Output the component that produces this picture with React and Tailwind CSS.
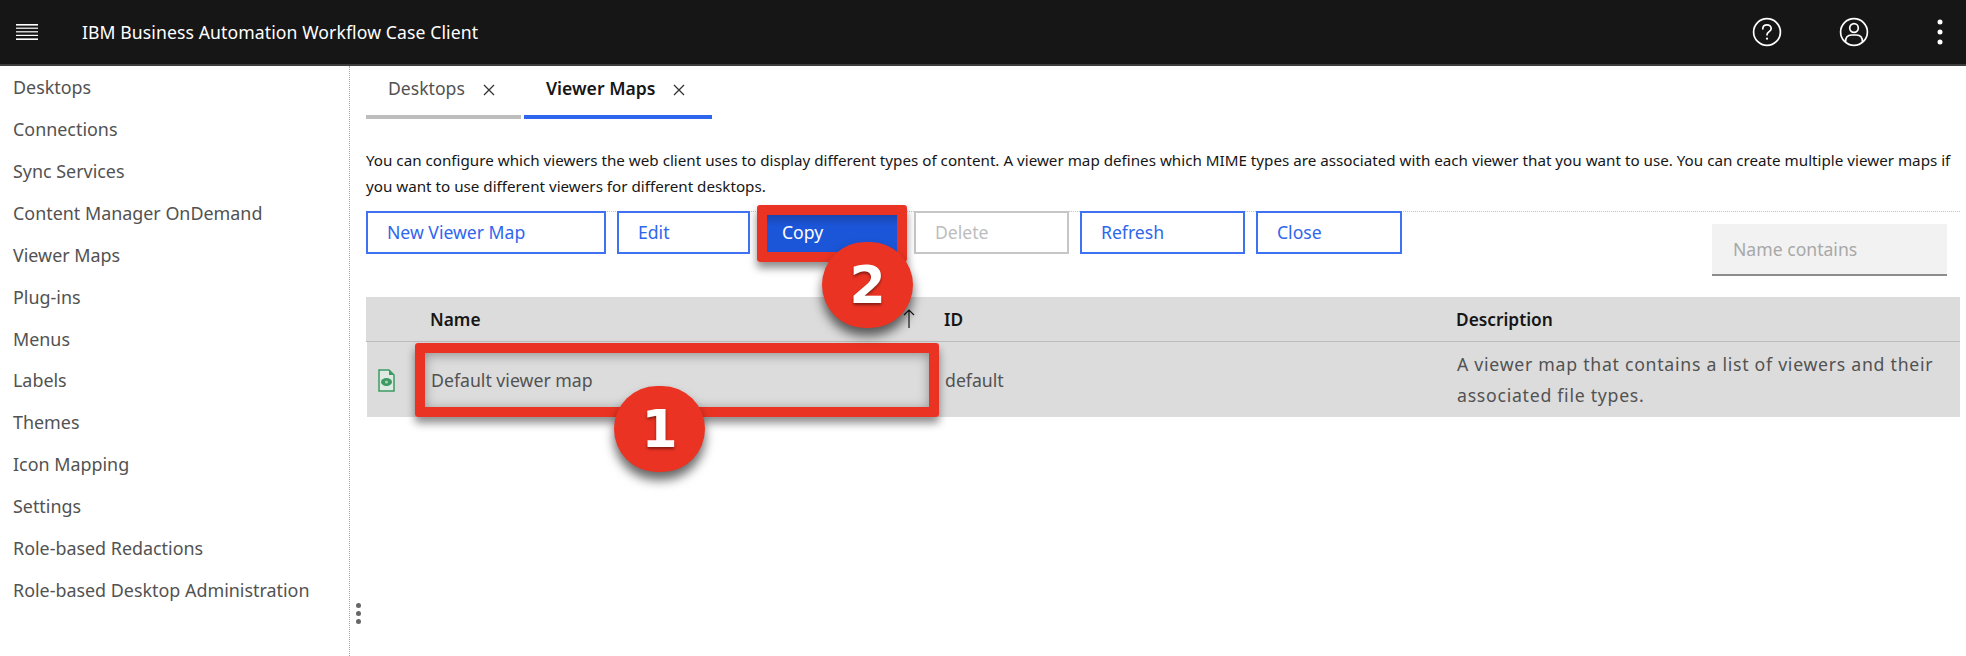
import React from "react";

const nav = ["Desktops","Connections","Sync Services","Content Manager OnDemand","Viewer Maps","Plug-ins","Menus","Labels","Themes","Icon Mapping","Settings","Role-based Redactions","Role-based Desktop Administration"];

function Btn({ children, w, cls = "" }) {
  return <button className={`h-[43px] shrink-0 border-2 border-[#3f72f3] bg-white pl-[19px] text-left text-[17.6px] text-[#2f66ee] ${w} ${cls}`}>{children}</button>;
}

function Badge({ n, cls }) {
  return (
    <div className={`absolute z-20 flex h-[86px] w-[91px] items-center justify-center rounded-full bg-[#ea3323] font-['DejaVu_Sans',sans-serif] text-[52px] font-bold text-white shadow-[0_8px_11px_rgba(0,0,0,0.6)] [text-shadow:0_2px_3px_rgba(0,0,0,0.45)] ${cls}`}>{n}</div>
  );
}

export default function App() {
  return (
    <div className="flex h-[656px] w-full flex-col overflow-hidden bg-white font-['Noto_Sans',sans-serif]">
      <header className="flex h-[66px] shrink-0 items-center border-b-2 border-[#3d3d3d] bg-[#161616] text-white">
        <svg width="22" height="16" viewBox="0 0 22 16" className="ml-[16px]" fill="#fff">
          <rect y="0" width="22" height="1.6" /><rect y="3.6" width="22" height="1.2" /><rect y="7.2" width="22" height="1.2" /><rect y="10.800" width="22" height="1.200" /><rect y="14.400" width="22" height="1.600" />
        </svg>
        <div className="ml-[44px] text-[17.6px] tracking-[0.1px]">IBM Business Automation Workflow Case Client</div>
        <div className="ml-auto flex items-center">
          <svg width="30" height="30" viewBox="0 0 30 30" fill="none" stroke="#fff" strokeWidth="1.7">
            <circle cx="15" cy="15" r="13.4" />
            <path d="M10.8 11.8c0-2.5 1.9-4 4.2-4s4.200 1.500 4.200 3.700c0 3.200-4.200 3-4.200 6.300" strokeLinecap="round" />
            <circle cx="15" cy="21.700" r="1.100" fill="#fff" stroke="none" />
          </svg>
          <svg width="30" height="30" viewBox="0 0 30 30" fill="none" stroke="#fff" strokeWidth="1.7" className="ml-[57px]">
            <circle cx="15" cy="15" r="13.400" />
            <circle cx="15" cy="11" r="4.300" />
            <path d="M6.500 25c0-4.500 2.500-7 6-7h5c3.500 0 6 2.500 6 7" />
          </svg>
          <svg width="8" height="26" viewBox="0 0 8 26" fill="#fff" className="ml-[67px] mr-[22px]">
            <circle cx="4" cy="3" r="2.500" /><circle cx="4" cy="13" r="2.500" /><circle cx="4" cy="23" r="2.500" />
          </svg>
        </div>
      </header>

      <div className="flex min-h-0 flex-1">
        <aside className="relative w-[350px] shrink-0 border-r border-dotted border-[#aaaaaa] pt-[1px]">
          <ul>
            {nav.map((n) => (
              <li key={n} className="flex h-[41.85px] items-center pl-[13px] text-[17.9px] text-[#525252]">{n}</li>
            ))}
          </ul>
          <div className="absolute right-[-12px] top-[537px] flex flex-col gap-[3px]">
            <span className="h-[5px] w-[5px] rounded-full bg-[#666666]" />
            <span className="h-[5px] w-[5px] rounded-full bg-[#666666]" />
            <span className="h-[5px] w-[5px] rounded-full bg-[#666666]" />
          </div>
        </aside>

        <main className="relative min-w-0 flex-1 pl-[16px] pr-[6px]">
          <div className="flex h-[53px] gap-[3px]">
            <div className="flex w-[155px] items-center border-b-4 border-[#bdbdbd] pb-[4px] pl-[22px] text-[17.6px] text-[#525252]">
              Desktops
              <svg width="12" height="12" viewBox="0 0 12 12" stroke="#333" strokeWidth="1.300" className="ml-[18px] mt-[2px]"><path d="M1 1l10 10M11 1L1 11" /></svg>
            </div>
            <div className="flex w-[188px] items-center border-b-4 border-[#2f66ee] pb-[4px] pl-[22px] text-[17.6px] font-semibold text-[#161616]">
              Viewer Maps
              <svg width="12" height="12" viewBox="0 0 12 12" stroke="#333" strokeWidth="1.300" className="ml-[18px] mt-[2px]"><path d="M1 1l10 10M11 1L1 11" /></svg>
            </div>
          </div>

          <p className="mt-[28px] text-[15.2px] leading-[26px] text-[#161616]">
            You can configure which viewers the web client uses to display different types of content. A viewer map defines which MIME types are associated with each viewer that you want to use. You can create multiple viewer maps if you want to use different viewers for different desktops.
          </p>

          <div className="relative mt-[12px] flex h-[86px] items-start border-t border-dotted border-[#c4c4c4] pt-0">
            <div className="-mt-[1px] flex items-start">
              <Btn w="w-[240px]">New Viewer Map</Btn>
              <Btn w="w-[133px]" cls="ml-[11px]">Edit</Btn>
              <div className="relative ml-[10px]">
                <button className="h-[43px] w-[144px] bg-[linear-gradient(180deg,#1a3f9e_0%,#1b55d8_35%,#1b55d8_100%)] pl-[22px] text-left text-[17.6px] text-white">Copy</button>
                <div className="absolute -left-[3px] -top-[6px] z-10 h-[57px] w-[150px] rounded-[3px] border-[10px] border-[#ea3323] shadow-[0_6px_8px_rgba(0,0,0,0.45)]" />
              </div>
              <Btn w="w-[155px]" cls="ml-[10px] !border-[#c6c6c6] !text-[#bdbdbd]">Delete</Btn>
              <Btn w="w-[165px]" cls="ml-[11px]">Refresh</Btn>
              <Btn w="w-[146px]" cls="ml-[11px]">Close</Btn>
            </div>
            <div className="ml-auto mr-[13px] mt-[12px] flex h-[52px] w-[235px] items-center border-b-2 border-[#8d8d8d] bg-[#f2f2f2] pl-[21px] text-[17.6px] text-[#a8a8a8]">Name contains</div>
          </div>

          <div className="relative">
            <div className="grid h-[45px] grid-cols-[64px_514px_512px_1fr] items-center border-b border-[#bdbdbd] bg-[#dcdcdc] pt-[1px] text-[17.3px] font-semibold text-[#161616]">
              <div />
              <div className="relative">Name
                <svg width="12" height="19" viewBox="0 0 12 19" fill="none" stroke="#161616" strokeWidth="1.200" className="absolute left-[473px] top-[2px]"><path d="M6 1v18M1 6l5-5 5 5" /></svg>
              </div>
              <div>ID</div>
              <div>Description</div>
            </div>
            <div className="ml-[1px] grid h-[75px] grid-cols-[64px_514px_512px_1fr] items-center bg-[#dcdcdc] pt-[1px] text-[17.7px] text-[#525252]">
              <div className="pl-[11px]">
                <svg width="17" height="23" viewBox="0 0 17 23" fill="none">
                  <path d="M1 1h10l5 5v16H1z" stroke="#3c9a62" strokeWidth="1.500" fill="#dfeae3" />
                  <path d="M11 1v5h5z" fill="#3c9a62" />
                  <ellipse cx="8.500" cy="13" rx="5.500" ry="4" fill="#3c9a62" />
                  <circle cx="8.500" cy="13" r="1.600" fill="#a6d3b6" />
                </svg>
              </div>
              <div>Default viewer map</div>
              <div>default</div>
              <div className="text-[17.7px] leading-[31px] tracking-[0.72px]">A viewer map that contains a list of viewers and their<br />associated file types.</div>
            </div>
            <div className="absolute left-[49px] top-[46px] z-10 h-[74px] w-[524px] rounded-[3px] border-[10px] border-[#ea3323] shadow-[0_6px_8px_rgba(0,0,0,0.45),inset_0_2px_12px_rgba(0,0,0,0.35)]" />
            <Badge n="1" cls="left-[248px] top-[89px]" />
            <Badge n="2" cls="left-[456px] -top-[55px]" />
          </div>
        </main>
      </div>
    </div>
  );
}
